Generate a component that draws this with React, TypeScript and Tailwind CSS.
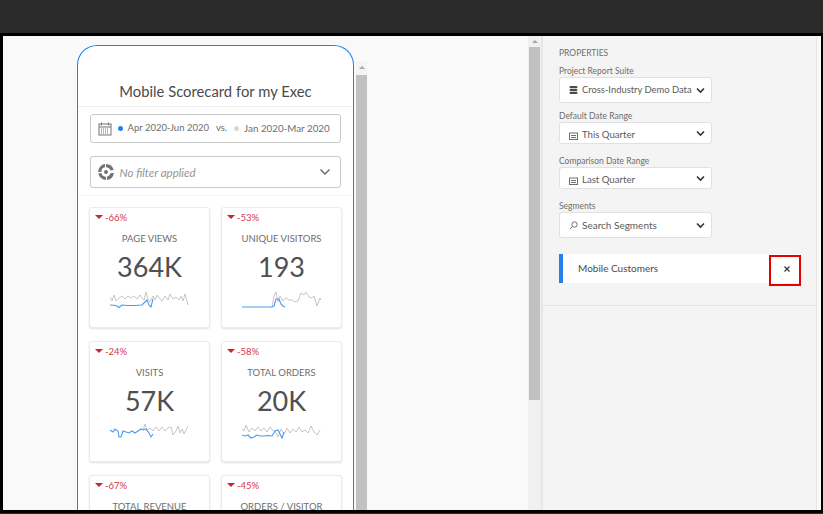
import React from "react";

const F = 'Lato,"Open Sans","Noto Sans",sans-serif';

function Spark({ grey, blue }: { grey: string; blue: string }) {
  return (
    <svg width={80} height={24} viewBox="0 0 80 24" className="block" fill="none">
      <polyline points={grey} stroke="#c6c6c6" strokeWidth="1" />
      <polyline points={blue} stroke="#4a9bf0" strokeWidth="1.1" />
    </svg>
  );
}

const A = {
  g: "0,9 2,13 4,7 6,13 9,10 12,8 15,11 18,8 21,10 24,8 27,11 30,7 32,10 34,12 36,4 38,11 40,14 43,8 45,12 47,7 50,11 52,13 55,8 58,12 60,6 63,11 66,9 69,12 71,8 73,13 75,6 77,13 78,17",
  b: "0,17 6,17.5 9,19.5 12,17 18,17.5 24,17.5 32,17 35,14 37,12 39,17 41,19 43,11",
};
const B = {
  g: "30,19 32,8 34,4 36,14 38,8 41,13 44,10 47,12 50,12 53,14 56,13 59,5 62,7 64,4 67,9 70,10 72,8 75,18 78,10 79,12",
  b: "0,19 30,19 32,18 34,11 37,11 39,16 41,18 43,19",
};
const C = {
  g: "33,8 35,2 37,9 40,6 43,9 46,5 49,9 52,5 55,9 58,6 61,5 63,13 66,9 68,4 70,11 72,7 74,12 78,4",
  b: "0,8 3,10 5,7 8,9 9,15 11,15 13,9 16,10 19,11 22,9 25,11 28,9 31,7 33,8 36,7 39,11 41,15 43,12",
};
const D = {
  g: "0,7 2,9 4,3 7,10 10,6 13,9 16,5 19,9 22,6 25,10 28,5 31,9 33,9 36,15 39,7 42,12 45,6 48,11 51,7 54,10 57,5 60,10 63,8 66,11 69,4 72,10 75,13 78,8",
  b: "0,13 3,14 6,13 9,16 12,15 15,13 18,14 22,14 26,13.5 30,14 33,9 36,8 38,12 40,16 42,10",
};

function Card({ delta, title, value, s }: { delta: string; title: string; value?: string; s?: { g: string; b: string } }) {
  return (
    <div className="w-[121px] h-[121px] shrink-0 bg-white rounded-[3px] border border-[#ebebeb] shadow-[0_1px_2px_rgba(0,0,0,0.12)] flex flex-col items-center">
      <div className="self-start flex items-center h-[14px] mt-[3px] pl-[5px] text-[9.5px] text-[#d7373f] leading-none">
        <span className="w-0 h-0 border-l-[4px] border-r-[4px] border-t-[4px] border-l-transparent border-r-transparent border-t-[#c9252d] mr-[2px] mb-[2px]" />
        <span>{delta}</span>
      </div>
      <div className="mt-[6px] h-[16px] leading-[16px] text-[9.5px] text-[#6e6e6e] whitespace-nowrap">{title}</div>
      {value && <div className="mt-[2px] h-[36px] leading-[36px] text-[27px] text-[#505050]">{value}</div>}
      {s && (
        <div className="mt-[3px]">
          <Spark grey={s.g} blue={s.b} />
        </div>
      )}
    </div>
  );
}

function Field({
  label,
  icon,
  text,
  mb,
  h,
  low = false,
  size = "text-[10px]",
}: {
  label: string;
  icon: React.ReactNode;
  text: string;
  mb: string;
  h: string;
  low?: boolean;
  size?: string;
}) {
  return (
    <div className={mb}>
      <div className="h-[13px] leading-[15px] text-[8.5px] text-[#6e6e6e] whitespace-nowrap">{label}</div>
      <div className={`w-[153px] ${h} bg-white border border-[#e1e1e1] rounded-[3px] flex items-center pl-[9px] pr-[6px] ${size} text-[#5a5a5a]`}>
        <span className={`w-[9px] shrink-0 flex justify-center mr-[4px] ${low ? "pt-[5px]" : ""}`}>{icon}</span>
        <span className={`flex-1 whitespace-nowrap ${low ? "pt-[5px]" : ""}`}>{text}</span>
        <svg width="9" height="7" viewBox="0 0 9 7" fill="none" stroke="#333" strokeWidth="1.6" className="shrink-0">
          <path d="M1 1.5 4.5 5 8 1.5" />
        </svg>
      </div>
    </div>
  );
}

const Db = () => (
  <svg width="9" height="8" viewBox="0 0 9 8" fill="#4b4b4b">
    <rect x="0.5" y="0" width="8" height="2.2" rx="1.1" />
    <rect x="0.5" y="2.9" width="8" height="2.2" rx="1.1" />
    <rect x="0.5" y="5.8" width="8" height="2.2" rx="1.1" />
  </svg>
);
const Cal = () => (
  <svg width="9" height="8" viewBox="0 0 9 8" fill="none" stroke="#6e6e6e">
    <rect x="0.5" y="1" width="8" height="6.5" />
    <path d="M2 3.5h5M2 5.5h5" />
  </svg>
);
const Search = () => (
  <svg width="9" height="9" viewBox="0 0 9 9" fill="none" stroke="#6e6e6e">
    <circle cx="5.5" cy="3.5" r="2.7" />
    <path d="M3.5 5.5 1 8" />
  </svg>
);

const UpArrow = () => (
  <span className="w-0 h-0 border-l-[3px] border-r-[3px] border-b-[3px] border-l-transparent border-r-transparent border-b-[#a8a8a8]" />
);

export default function App() {
  return (
    <div className="w-[823px] h-[514px] bg-[#2b2b2b] overflow-hidden flex flex-col" style={{ fontFamily: F }}>
      <div className="h-[33px] shrink-0" />
      <div className="w-[823px] h-[480px] border-l-[3px] border-t-[3px] border-b-[3px] border-r-[2px] border-black bg-[#f9f9f9] flex overflow-hidden">
        <div className="w-[74px] shrink-0" />
        <div className="w-[277px] h-[600px] shrink-0 mt-[9px] bg-white border-[1.5px] border-b-0 border-[#2680eb] rounded-t-[20px] flex flex-col">
          <div className="h-[61px] shrink-0 flex items-end justify-center pb-[5px] border-b border-[#eeeeee] text-[14.8px] leading-[20px] text-[#4b4b4b]">
            Mobile Scorecard for my Exec
          </div>
          <div className="h-[29px] w-[251px] ml-[11.5px] mt-[7px] shrink-0 border border-[#cacaca] rounded-[3px] flex items-center pl-[7px] text-[9.5px] text-[#6e6e6e] whitespace-nowrap">
            <svg width="14" height="14" viewBox="0 0 14 14" fill="none" stroke="#747474" className="mr-[6px] shrink-0">
              <rect x="1" y="2" width="12" height="11" />
              <path d="M1 5h12M3.5 0.5v3M10.5 0.5v3" />
              <path d="M3 7h8M3 9h8M3 11h8" strokeDasharray="1 1" />
            </svg>
            <span className="w-[5px] h-[5px] rounded-full bg-[#2680eb] mr-[5px] shrink-0" />
            <span>Apr 2020-Jun 2020</span>
            <span className="ml-[7px] mr-[7px]">vs.</span>
            <span className="w-[5px] h-[5px] rounded-full bg-[#d8d8d8] mr-[5px] shrink-0" />
            <span className="text-[9.8px]">Jan 2020-Mar 2020</span>
          </div>
          <div className="h-[32px] w-[251px] ml-[11.5px] mt-[13px] shrink-0 border border-[#cacaca] rounded-[3px] flex items-center pl-[7px] pr-[9px] text-[11.5px] italic text-[#959595]">
            <svg width="16" height="16" viewBox="0 0 16 16" className="mr-[6px] shrink-0" fill="#747474">
              <path d="M8 0a8 8 0 0 1 7.7 6l-3.2.6A4.8 4.8 0 0 0 8 3.2z" />
              <path d="M7 0.1 7 3.3A4.8 4.8 0 0 0 3.3 8H0.1A8 8 0 0 1 7 0.1z" />
              <path d="M0.3 9.5 3.4 9A4.8 4.8 0 0 0 8 12.8V16A8 8 0 0 1 0.3 9.5z" />
              <path d="M9 15.9V12.7A4.8 4.8 0 0 0 12.7 9h3.2A8 8 0 0 1 9 15.9z" />
              <circle cx="8" cy="8" r="2" />
            </svg>
            <span className="flex-1 pt-[1px]">No filter applied</span>
            <svg width="12" height="8" viewBox="0 0 12 8" fill="none" stroke="#6e6e6e" strokeWidth="1.5" className="shrink-0">
              <path d="M1.5 1.5 6 6l4.5-4.5" />
            </svg>
          </div>
          <div className="h-[1px] mt-[7px] bg-[#f4f4f4] shrink-0" />
          <div className="pl-[11px] pt-[11px] flex flex-wrap gap-x-[11px] gap-y-[13px]">
            <Card delta="-66%" title="PAGE VIEWS" value="364K" s={A} />
            <Card delta="-53%" title="UNIQUE VISITORS" value="193" s={B} />
            <Card delta="-24%" title="VISITS" value="57K" s={C} />
            <Card delta="-58%" title="TOTAL ORDERS" value="20K" s={D} />
            <Card delta="-67%" title="TOTAL REVENUE" />
            <Card delta="-45%" title="ORDERS / VISITOR" />
          </div>
        </div>
        <div className="w-[11px] shrink-0 ml-[2px] mt-[25px] flex flex-col">
          <div className="h-[14px] shrink-0 bg-[#f4f4f4] flex justify-center pt-[5px]">
            <UpArrow />
          </div>
          <div className="flex-1 bg-[#c1c1c1]" />
        </div>
        <div className="w-[161px] shrink-0" />
        <div className="w-[13px] shrink-0 flex flex-col bg-[#f0f0f0]">
          <div className="h-[11px] shrink-0 flex justify-center pt-[4px]">
            <UpArrow />
          </div>
          <div className="h-[353px] w-[11px] ml-[1px] bg-[#c1c1c1]" />
        </div>
        <div className="w-[2px] shrink-0 bg-[#e6e6e6]" />
        <div className="w-[274px] shrink-0 bg-[#f4f4f4] border-r border-[#e6e6e6]">
          <div className="h-[270px] border-b border-[#e1e1e1] pl-[16px] pt-[9px]">
            <div className="h-[14px] leading-[16px] text-[8.5px] text-[#6e6e6e] mb-[5px]">PROPERTIES</div>
            <Field label="Project Report Suite" icon={<Db />} text="Cross-Industry Demo Data" h="h-[26px]" mb="mb-[6px]" size="text-[9.4px]" />
            <Field label="Default Date Range" icon={<Cal />} text="This Quarter" h="h-[22px]" mb="mb-[10px]" low size="text-[9.6px]" />
            <Field label="Comparison Date Range" icon={<Cal />} text="Last Quarter" h="h-[22px]" mb="mb-[10px]" low size="text-[9.6px]" />
            <Field label="Segments" icon={<Search />} text="Search Segments" h="h-[26px]" mb="mb-[16px]" />
            <div className="w-[240px] h-[29px] bg-white flex items-center relative">
              <span className="w-[4px] h-full bg-[#2680eb] shrink-0" />
              <span className="ml-[15px] text-[10px] text-[#4b4b4b]">Mobile Customers</span>
              <div className="absolute left-[210px] top-[1px] w-[32px] h-[31px] border-2 border-[#e60000] flex items-center justify-center pl-[3px] pb-[3px]">
                <svg width="8" height="8" viewBox="0 0 8 8" stroke="#333" strokeWidth="1.2">
                  <path d="M1.5 1.5l5 5M6.5 1.5l-5 5" />
                </svg>
              </div>
            </div>
          </div>
        </div>
      </div>
    </div>
  );
}
